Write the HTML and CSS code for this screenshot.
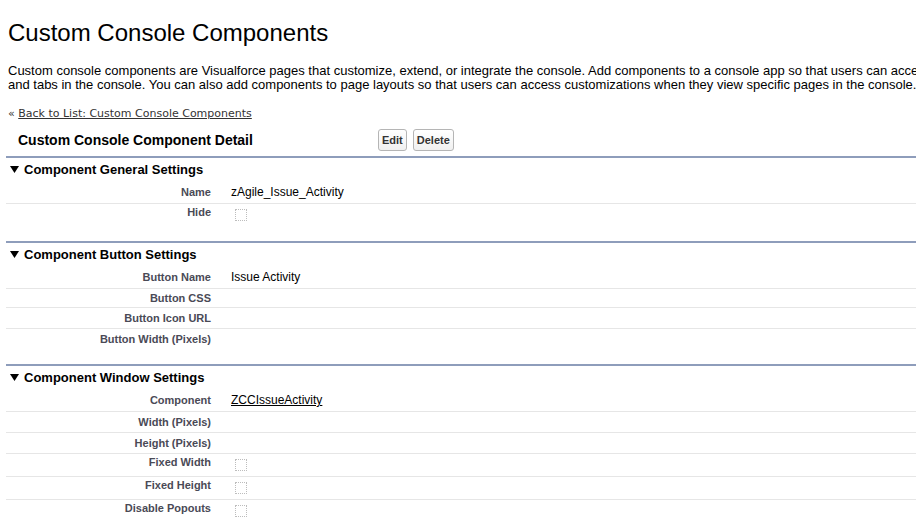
FILE: index.html
```html
<!DOCTYPE html>
<html>
<head>
<meta charset="utf-8">
<title>Custom Console Components</title>
<link rel="stylesheet" href="styles.css">
</head>
<body>
<div class="page">
  <h1 class="title">Custom Console Components</h1>
  <div class="desc">
    <div class="desc-line">Custom console components are Visualforce pages that customize, extend, or integrate the console. Add components to a console app so that users can access them from the footer, sidebars, highlights panels, and interaction logs</div>
    <div class="desc-line">and tabs in the console. You can also add components to page layouts so that users can access customizations when they view specific pages in the console.</div>
  </div>
  <div class="back">« <a href="#" class="back-link">Back to List: Custom Console Components</a></div>

  <div class="detail">
    <div class="detail-head">
      <h2 class="detail-title">Custom Console Component Detail</h2>
      <div class="btns">
        <button class="btn">Edit</button>
        <button class="btn">Delete</button>
      </div>
    </div>

    <section class="sec">
      <h3 class="sec-head"><svg class="tri" width="9" height="7" viewBox="0 0 9 7"><polygon points="0,0 9,0 4.5,7" fill="#000"/></svg>Component General Settings</h3>
      <div class="row"><div class="lbl">Name</div><div class="val">zAgile_Issue_Activity</div></div>
      <div class="row row-chk"><div class="lbl">Hide</div><div class="val"><span class="chk"></span></div></div>
    </section>

    <section class="sec">
      <h3 class="sec-head"><svg class="tri" width="9" height="7" viewBox="0 0 9 7"><polygon points="0,0 9,0 4.5,7" fill="#000"/></svg>Component Button Settings</h3>
      <div class="row"><div class="lbl">Button Name</div><div class="val">Issue Activity</div></div>
      <div class="row row-short"><div class="lbl">Button CSS</div><div class="val"></div></div>
      <div class="row"><div class="lbl">Button Icon URL</div><div class="val"></div></div>
      <div class="row"><div class="lbl">Button Width (Pixels)</div><div class="val"></div></div>
    </section>

    <section class="sec">
      <h3 class="sec-head"><svg class="tri" width="9" height="7" viewBox="0 0 9 7"><polygon points="0,0 9,0 4.5,7" fill="#000"/></svg>Component Window Settings</h3>
      <div class="row"><div class="lbl">Component</div><div class="val"><a href="#" class="val-link">ZCCIssueActivity</a></div></div>
      <div class="row"><div class="lbl">Width (Pixels)</div><div class="val"></div></div>
      <div class="row"><div class="lbl">Height (Pixels)</div><div class="val"></div></div>
      <div class="row row-chk"><div class="lbl">Fixed Width</div><div class="val"><span class="chk"></span></div></div>
      <div class="row row-chk"><div class="lbl">Fixed Height</div><div class="val"><span class="chk"></span></div></div>
      <div class="row row-chk"><div class="lbl">Disable Popouts</div><div class="val"><span class="chk"></span></div></div>
    </section>
  </div>
</div>
</body>
</html>
```

FILE: styles.css
```css
html, body {
  margin: 0;
  padding: 0;
  background: #fff;
  overflow: hidden;
}
body {
  font-family: "Liberation Sans", Arial, sans-serif;
  color: #000;
  width: 916px;
  height: 518px;
}
.page {
  width: 916px;
}
.title {
  margin: 0;
  padding: 19px 0 0 8px;
  font-size: 24px;
  font-weight: normal;
  line-height: 28px;
}
.desc {
  margin-top: 17px;
  padding-left: 8px;
  font-size: 13px;
  line-height: 14px;
  white-space: nowrap;
}
.back {
  margin-top: 15px;
  padding-left: 8px;
  font-family: "DejaVu Sans", Verdana, sans-serif;
  font-size: 11px;
  line-height: 14px;
  color: #333;
}
.back-link {
  color: #333;
  text-decoration: underline;
}
.detail {
  margin: 3px 0 0 6px;
}
.detail-head {
  display: flex;
  align-items: center;
  height: 32px;
  border-bottom: 2px solid #8e9dbb;
}
.detail-title {
  margin: 0;
  width: 360px;
  padding-left: 12px;
  font-size: 14px;
  font-weight: bold;
}
.btns {
  display: flex;
  gap: 6px;
}
.btn {
  height: 22px;
  padding: 0 3px;
  font-family: "Liberation Sans", Arial, sans-serif;
  font-size: 11px;
  font-weight: bold;
  color: #333;
  border: 1px solid #b5b5b5;
  border-radius: 3px;
  background: linear-gradient(#ffffff, #f0f0f0);
}
.sec {
  padding-bottom: 15px;
}
.sec + .sec {
  border-top: 2px solid #8e9dbb;
}
.sec-head {
  margin: 0;
  height: 23px;
  display: flex;
  align-items: center;
  padding-left: 4px;
  font-size: 13px;
  font-weight: bold;
}
.tri {
  margin-right: 5px;
}
.row {
  display: grid;
  grid-template-columns: 215px 1fr;
  align-items: center;
  min-height: 20px;
  border-bottom: 1px solid #e6e6e6;
}
.row:last-child {
  border-bottom: none;
}
.row-short {
  min-height: 18px;
}
.lbl {
  text-align: right;
  padding-right: 10px;
  font-size: 11px;
  line-height: 13px;
  font-weight: bold;
  color: #4a4a56;
}
.row-chk .lbl {
  align-self: start;
  padding-top: 2px;
}
.val {
  padding-left: 10px;
  font-size: 12px;
  line-height: 22px;
}
.val:empty {
  line-height: 0;
}
.val-link {
  color: #000;
  text-decoration: underline;
}
.chk {
  display: block;
  width: 12px;
  height: 12px;
  box-sizing: border-box;
  margin: 5px 0 5px 4px;
  border: 1px dotted #bdbdbd;
}
```
